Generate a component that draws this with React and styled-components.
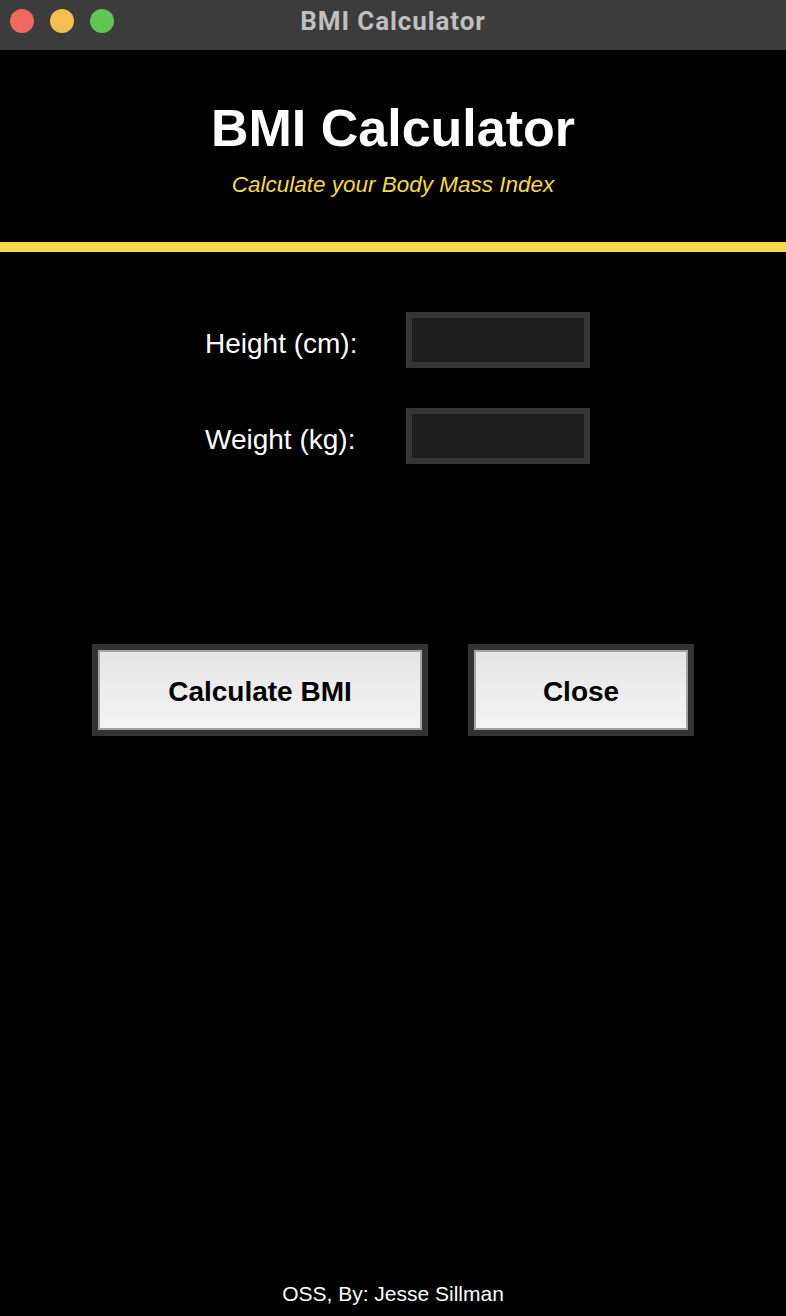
import React from 'react';
import styled, { createGlobalStyle } from 'styled-components';

const GlobalStyle = createGlobalStyle`
  html, body {
    margin: 0;
    padding: 0;
    background: #000;
  }
  body {
    font-family: "Liberation Sans", Arial, sans-serif;
  }
`;

const Window = styled.div`
  display: flex;
  flex-direction: column;
  min-height: 100vh;
  background: #000;
`;

const TitleBar = styled.div`
  height: 50px;
  background: #3c3c3c;
  display: grid;
  grid-template-columns: 1fr auto 1fr;
  align-items: center;
`;

const Lights = styled.div`
  display: flex;
  gap: 16px;
  padding-left: 10px;
  padding-bottom: 8px;
`;

const Light = styled.span`
  width: 24px;
  height: 24px;
  border-radius: 50%;
  background: ${(p) => p.color};
`;

const WindowTitle = styled.div`
  font-family: Roboto, "Liberation Sans", sans-serif;
  font-weight: 700;
  font-size: 26px;
  letter-spacing: 0.9px;
  color: #bfbfbf;
  padding-bottom: 8px;
`;

const Header = styled.header`
  display: flex;
  flex-direction: column;
  align-items: center;
  padding-top: 48px;
`;

const Title = styled.h1`
  margin: 0;
  font-size: 52px;
  line-height: 60px;
  font-weight: 700;
  color: #fff;
`;

const Subtitle = styled.p`
  margin: 13px 0 0;
  font-size: 22.5px;
  line-height: 28px;
  font-style: italic;
  color: #f9d84a;
`;

const Divider = styled.div`
  height: 10px;
  background: #f9d84a;
  margin-top: 43px;
`;

const Form = styled.div`
  display: grid;
  grid-template-columns: 201px 184px;
  row-gap: 40px;
  justify-content: center;
  align-items: center;
  padding-left: 9px;
  margin-top: 60px;
`;

const Label = styled.label`
  font-size: 28px;
  color: #fff;
  padding-top: 8px;
`;

const Field = styled.input`
  box-sizing: border-box;
  width: 184px;
  height: 56px;
  border: 6px solid #363636;
  background: #1f1f1f;
  color: #fff;
  font-size: 22px;
  outline: none;
  padding: 0 6px;
`;

const Actions = styled.div`
  display: flex;
  justify-content: center;
  gap: 40px;
  margin-top: 180px;
`;

const Button = styled.button`
  box-sizing: border-box;
  width: ${(p) => p.width}px;
  height: 92px;
  border: 6px solid #333;
  box-shadow: inset 0 0 0 2px #a3a3a3;
  background: linear-gradient(#e5e5e5, #f5f5f5);
  font-family: "Liberation Sans", Arial, sans-serif;
  font-weight: 700;
  font-size: 28px;
  color: #000;
  padding: 4px 0 0;
  cursor: pointer;
`;

const Footer = styled.footer`
  margin-top: auto;
  padding-bottom: 10px;
  text-align: center;
  font-size: 21px;
  line-height: 24px;
  color: #fff;
`;

const App = () => {
  return (
    <Window>
      <GlobalStyle />
      <TitleBar>
        <Lights>
          <Light color="#ee6a5f" />
          <Light color="#f5bf4f" />
          <Light color="#61c554" />
        </Lights>
        <WindowTitle>BMI Calculator</WindowTitle>
        <div />
      </TitleBar>
      <Header>
        <Title>BMI Calculator</Title>
        <Subtitle>Calculate your Body Mass Index</Subtitle>
      </Header>
      <Divider />
      <Form>
        <Label htmlFor="height">Height (cm):</Label>
        <Field id="height" />
        <Label htmlFor="weight">Weight (kg):</Label>
        <Field id="weight" />
      </Form>
      <Actions>
        <Button width={336}>Calculate BMI</Button>
        <Button width={226}>Close</Button>
      </Actions>
      <Footer>OSS, By: Jesse Sillman</Footer>
    </Window>
  );
};

export default App;
